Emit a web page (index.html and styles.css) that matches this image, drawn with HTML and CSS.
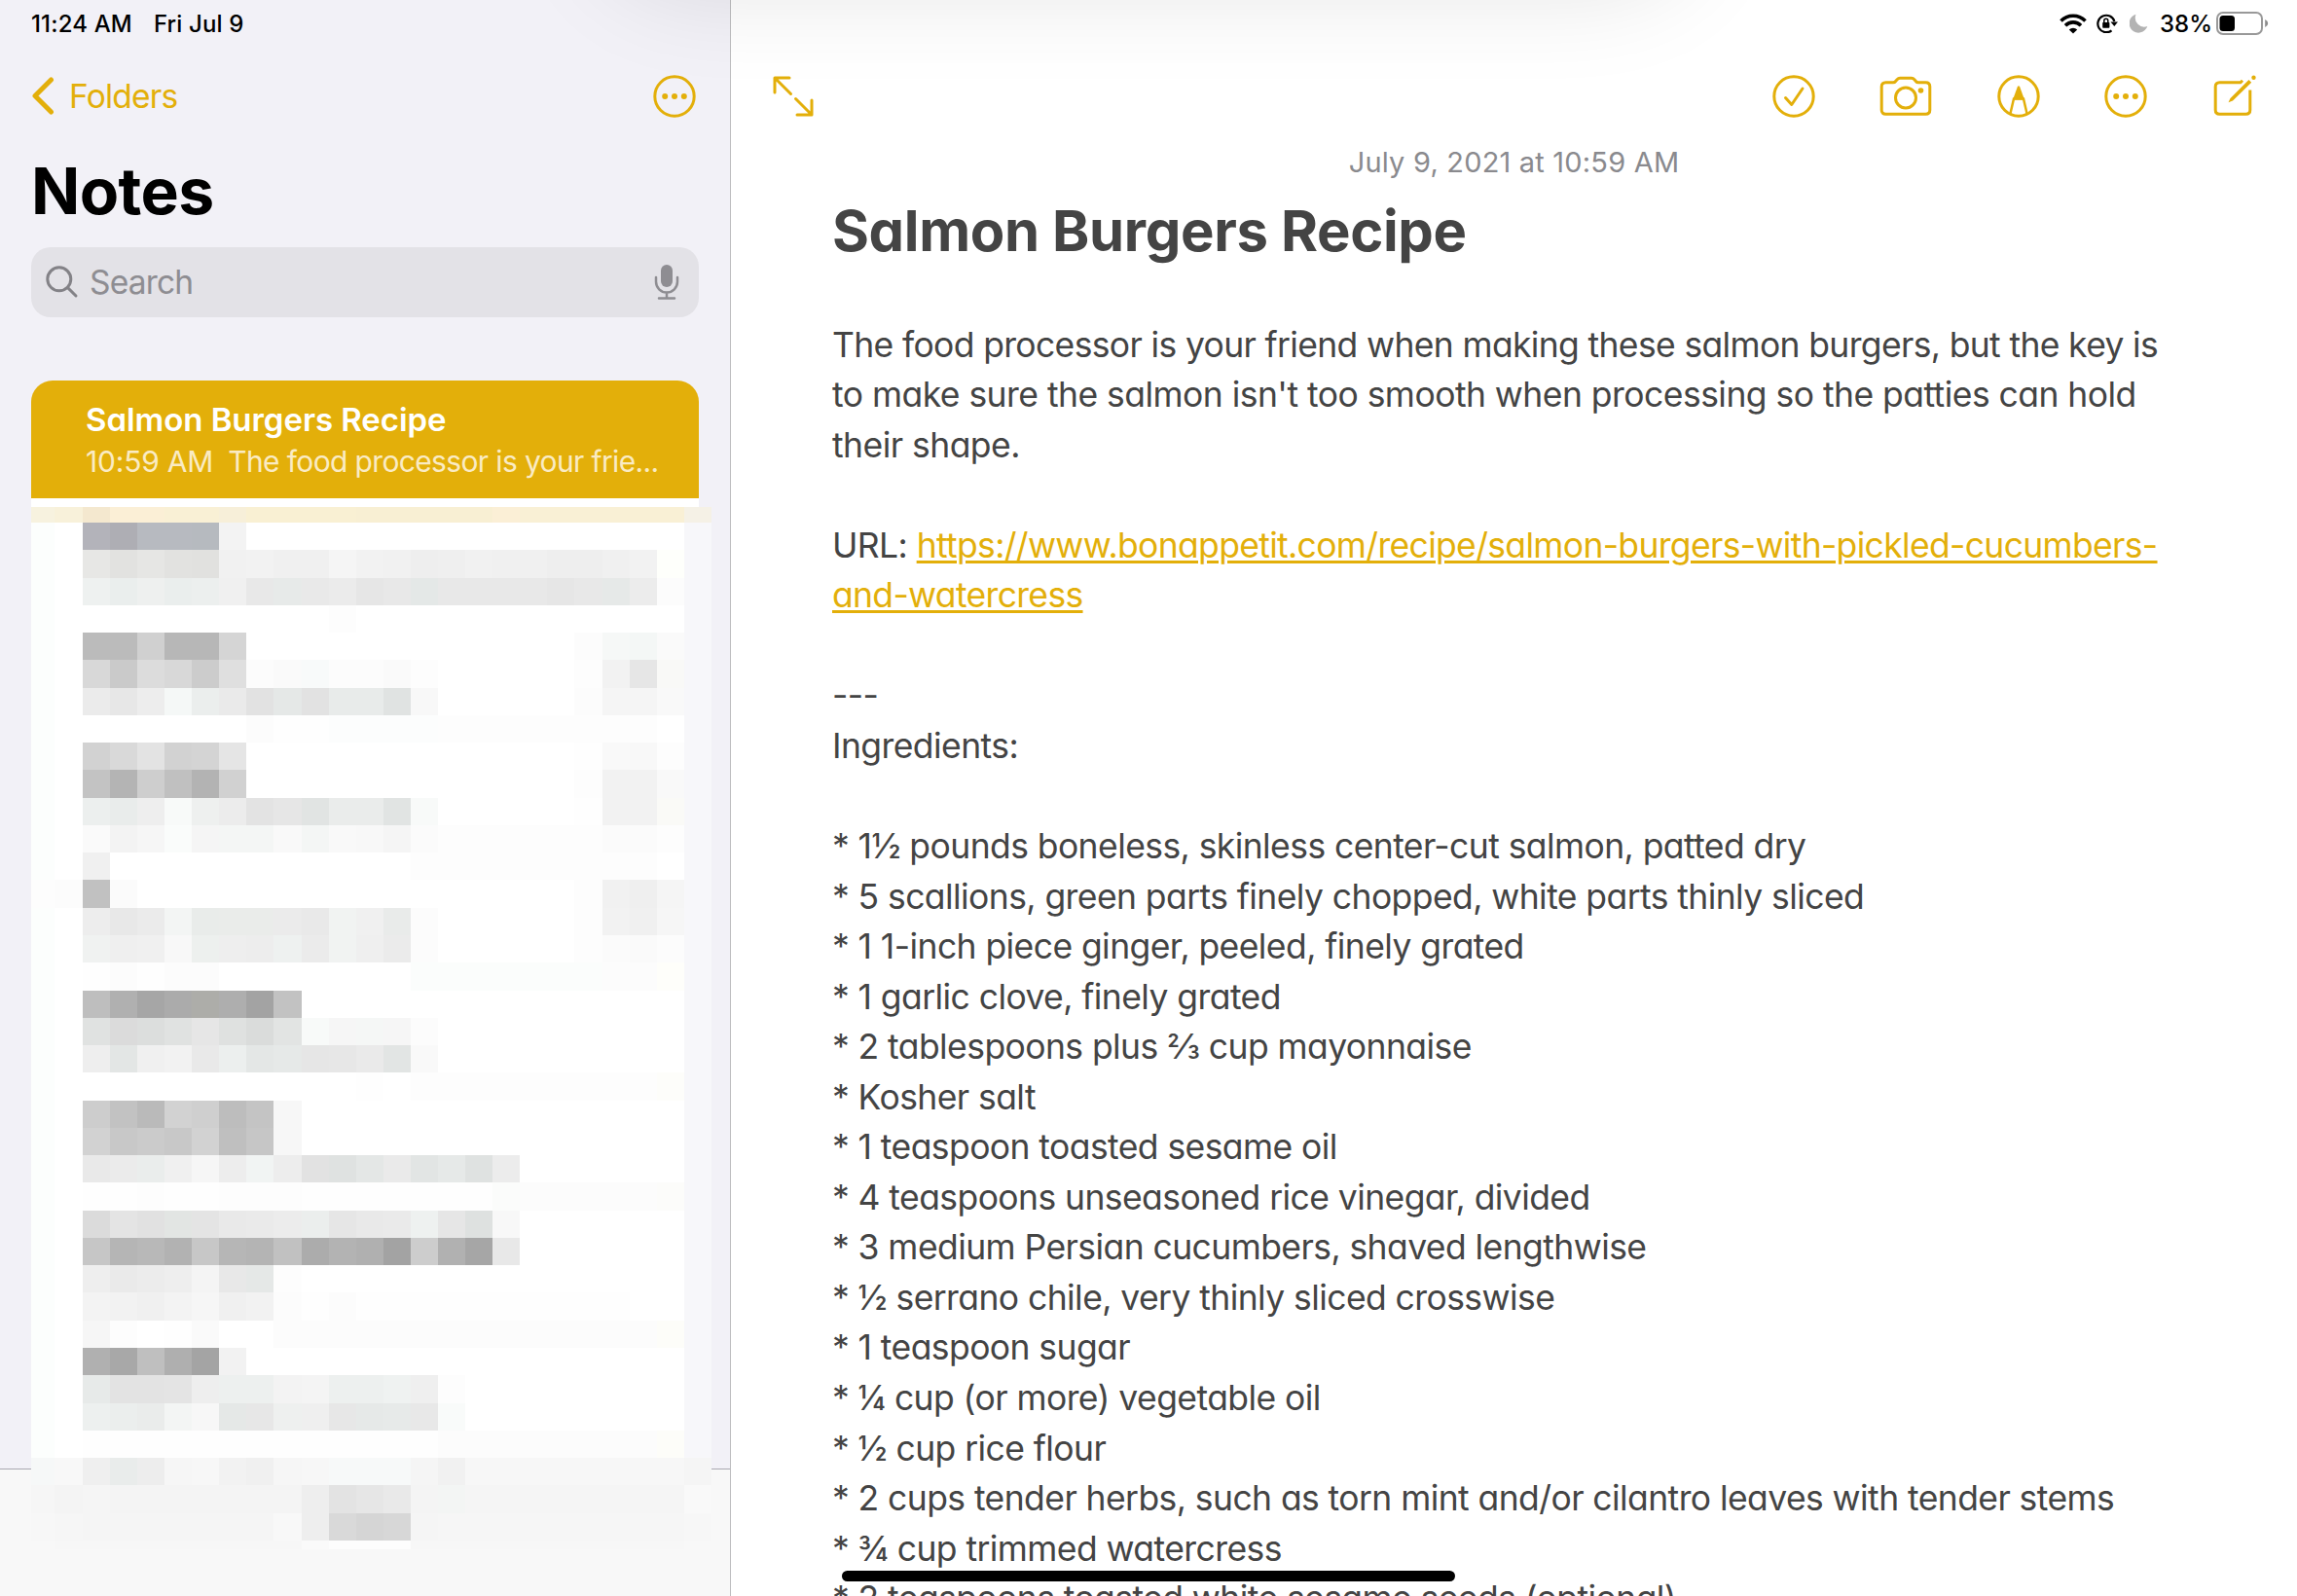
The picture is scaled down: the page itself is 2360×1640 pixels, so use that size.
FILE: index.html
```html
<!DOCTYPE html>
<html lang="en">
<head>
<meta charset="utf-8">
<title>Notes</title>
<link rel="stylesheet" href="styles.css">
</head>
<body>
<div class="app">
  <aside class="sidebar">
    <div class="status"><span class="time">11:24 AM</span><span class="day">Fri Jul 9</span></div>
    <nav class="side-nav">
      <a class="back"><svg width="24" height="39" viewBox="0 0 24 39"><path d="M20.500 3 L4 19.500 L20.500 36" class="back-stroke"/></svg><span class="back-label">Folders</span></a>
      <svg class="side-more" width="44" height="44" viewBox="0 0 44 44"><circle cx="22" cy="22" r="20.200" class="line"/><circle cx="12.200" cy="22" r="3" class="solid"/><circle cx="22" cy="22" r="3" class="solid"/><circle cx="31.800" cy="22" r="3" class="solid"/></svg>
    </nav>
    <h1 class="side-title"><span class="side-title-text">Notes</span></h1>
    <div class="search">
      <svg width="34" height="34" viewBox="0 0 34 34"><circle cx="13.800" cy="13.800" r="12" class="glass"/><path d="M22.600 22.600 L31 31" class="glass"/></svg>
      <span class="search-label">Search</span>
      <svg class="mic" width="26" height="38" viewBox="0 0 26 38"><rect x="7" y="1" width="12" height="23" rx="6" fill="#8e8d92"/><path d="M2 14v4.500a11 11 0 0 0 22 0V14M13 29.500v6M5 35.500h16" class="mic-line"/></svg>
    </div>
    <div class="list">
      <div class="item"><div class="item-title"><span class="t-title">Salmon Burgers Recipe</span></div><div class="item-sub"><span class="t-time">10:59 AM</span><span class="t-prev">The food processor is your frie...</span></div></div>
      <div class="mosaic" id="mosaic"></div>
    </div>
    <div class="toolbar"></div>
  </aside>
  <main class="note">
    <div class="status status-right">
      <svg class="wifi" width="28" height="21" viewBox="0 0 28 21"><path d="M1.500 7.500a17.500 17.500 0 0 1 25 0" class="w"/><path d="M6 12.200a11.400 11.400 0 0 1 16 0" class="w"/><path d="M9.800 16.400a6 6 0 0 1 8.400 0L14 20.600z" fill="#000"/></svg>
      <svg class="lock" width="22" height="20" viewBox="0 0 22 20"><path d="M15.500 17.300A8.700 8.700 0 1 1 18.400 8" class="lk"/><path d="M14.500 8.500h7.500l-3.700 4.500z"/><rect x="6.200" y="9" width="7.200" height="5.800" rx=".8"/><path d="M7.800 9.500V7.300a2 2 0 0 1 4 0v2.200" class="lk2"/></svg>
      <svg class="moon" width="19" height="20" viewBox="0 0 19 20"><path d="M6.500.8A9.600 9.600 0 1 0 18.300 13 9.300 9.300 0 0 1 6.500.8z" fill="#b3b3b3"/></svg>
      <span class="pct">38%</span>
      <svg class="battery" width="54" height="24" viewBox="0 0 54 24"><rect x="1" y="1" width="46" height="22" rx="6" class="bt"/><rect x="3.500" y="4" width="15.500" height="16" rx="3.500"/><path d="M50.200 8v8q3-1.500 3-4t-3-4z" fill="#8c8c8c"/></svg>
    </div>
    <nav class="note-nav">
      <svg width="42" height="42" viewBox="0 0 42 42"><path d="M2 17V2H17M2.500 2.500L18.500 18.500M40 25V40H25M39.500 39.500L23.500 23.500" class="line round"/></svg>
      <div class="actions">
        <svg class="i-check" width="44" height="44" viewBox="0 0 44 44"><circle cx="22" cy="22" r="20.200" class="line"/><path d="M13.500 23.500L19.800 30.500L31 14" class="line round"/></svg>
        <svg class="i-cam" width="54" height="44" viewBox="0 0 54 44"><path d="M6.500 7.800h7.500q1.600 0 2.600-1.300l1.700-1.900q1-1.300 2.800-1.300h11.800q1.800 0 2.800 1.300l1.700 1.900q1 1.300 2.600 1.300H47.500q4.300 0 4.300 4.300V36q0 4.300-4.300 4.300H6.500q-4.300 0-4.300-4.300V12.100q0-4.300 4.300-4.300z" class="line"/><circle cx="27" cy="23.500" r="10.500" class="line"/><circle cx="42.500" cy="16" r="2.800" class="solid"/></svg>
        <svg class="i-pen" width="44" height="44" viewBox="0 0 44 44"><circle cx="22" cy="22" r="20.200" class="line"/><path d="M13.500 39.500L17 24.500H27L30.500 39.500" class="line thin"/><path d="M16 25.500L20.700 12.500q1.300-2.400 2.600 0L28 25.500z" class="solid"/></svg>
        <svg class="i-more" width="44" height="44" viewBox="0 0 44 44"><circle cx="22" cy="22" r="20.200" class="line"/><circle cx="12.200" cy="22" r="3" class="solid"/><circle cx="22" cy="22" r="3" class="solid"/><circle cx="31.800" cy="22" r="3" class="solid"/></svg>
        <svg class="i-new" width="44" height="44" viewBox="0 0 44 44"><path d="M30 5.800l-2 2H6.500q-4.300 0-4.300 4.300V36q0 4.300 4.300 4.300H33.500q4.300 0 4.300-4.300V15.500" class="line"/><path d="M15.500 28.300l2-4.300L36.500 5l2.700 2.700L20 26.500z" class="solid"/><circle cx="41.500" cy="2.700" r="2.200" class="solid"/></svg>
      </div>
    </nav>
    <div class="date"><span class="date-text">July 9, 2021 at 10:59 AM</span></div>
    <article class="body">
      <h2 class="title"><span class="title-text">Salmon Burgers Recipe</span></h2>
      <p><span class="tight">The food processor is your friend when making these salmon burgers, but the key is</span><br><span>to make sure the salmon isn't too smooth when processing so the patties can hold</span><br><span>their shape.</span></p>
      <p>URL: <a class="url">https://www.bonappetit.com/recipe/salmon-burgers-with-pickled-cucumbers-<br>and-watercress</a></p>
      <p>---<br>Ingredients:</p>
      <ul class="ingredients">
        <li>* 1½ pounds boneless, skinless center-cut salmon, patted dry</li>
        <li>* 5 scallions, green parts finely chopped, white parts thinly sliced</li>
        <li>* 1 1-inch piece ginger, peeled, finely grated</li>
        <li>* 1 garlic clove, finely grated</li>
        <li>* 2 tablespoons plus ⅔ cup mayonnaise</li>
        <li>* Kosher salt</li>
        <li>* 1 teaspoon toasted sesame oil</li>
        <li>* 4 teaspoons unseasoned rice vinegar, divided</li>
        <li>* 3 medium Persian cucumbers, shaved lengthwise</li>
        <li>* ½ serrano chile, very thinly sliced crosswise</li>
        <li>* 1 teaspoon sugar</li>
        <li>* ¼ cup (or more) vegetable oil</li>
        <li>* ½ cup rice flour</li>
        <li>* 2 cups tender herbs, such as torn mint and/or cilantro leaves with tender stems</li>
        <li>* ¾ cup trimmed watercress</li>
        <li>* 2 teaspoons toasted white sesame seeds (optional)</li>
      </ul>
    </article>
  </main>
  <div class="top-shade"></div>
  <div class="home-bar"></div>
</div>
<script src="mosaic.js"></script>
</body>
</html>
```
FILE: styles.css
```css
* { box-sizing: border-box; margin: 0; padding: 0; }
body {
  width: 2360px; height: 1640px; overflow: hidden; background: #fff;
  font-family: Inter, "Liberation Sans", sans-serif; color: #444;
}
svg { display: block; flex: none; }
.app { position: relative; display: grid; grid-template-columns: 751px 1fr; width: 2360px; height: 1640px; overflow: hidden; }

.sidebar { position: relative; display: flex; flex-direction: column; height: 1640px; background: #f2f1f7; border-right: 1px solid #bdbdbf; }
.status { display: flex; flex: none; align-items: center; height: 48px; padding-left: 32px; gap: 22px; color: #000; font-size: 24px; font-weight: 500; letter-spacing: .150px; white-space: nowrap; }
.side-nav { display: flex; flex: none; justify-content: space-between; align-items: center; height: 101px; padding: 0 35px 0 32px; }
.back { display: flex; align-items: center; gap: 15px; color: #e3af0a; font-size: 33.500px; letter-spacing: -.800px; }
.back-stroke { fill: none; stroke: #e3af0a; stroke-width: 5; stroke-linecap: round; stroke-linejoin: round; }
.side-title { height: 105px; padding-left: 32px; color: #000; font-size: 66px; line-height: 94px; font-weight: 700; letter-spacing: -.600px; }
.search { display: flex; align-items: center; width: 686px; height: 72px; margin-left: 32px; padding: 0 20px 0 15px; border-radius: 20px; background: #e3e2e7; color: #8e8d92; font-size: 33.500px; letter-spacing: -.800px; }
.search-label { margin-left: 11px; }
.mic { margin-left: auto; }
.glass { fill: none; stroke: #838287; stroke-width: 3; stroke-linecap: round; }
.mic-line { fill: none; stroke: #8e8d92; stroke-width: 2.500; stroke-linecap: round; }
.line { fill: none; stroke: #e3af0a; stroke-width: 3; }
.thin { stroke-width: 2.500; }
.round { stroke-linecap: round; stroke-linejoin: round; }
.solid { fill: #e3af0a; }

.list { position: relative; z-index: 1; width: 686px; margin: 65px 0 0 32px; }
.item { height: 121px; padding: 18px 0 0 56px; border-radius: 22px 22px 0 0; background: #e3af0a; color: #fff; white-space: nowrap; font-feature-settings: "cv11"; }
.item-title { height: 44px; font-size: 33px; line-height: 44px; font-weight: 600; letter-spacing: -.050px; }
.item-sub { display: flex; gap: 15px; height: 43px; font-size: 30px; line-height: 43px; color: #faebc3; }
.t-time { letter-spacing: -.200px; }
.t-prev { letter-spacing: -.640px; }
.mosaic { width: 699px; padding-top: 9px; background: linear-gradient(#fff 0 9px, transparent 9px); background-size: 686px 100%; background-repeat: no-repeat; }
.mosaic-row { display: grid; grid-template-columns: 24px 28.800px repeat(23, 28.100px); height: 28.270px; }
.mosaic-row.first { height: 16px; }
.mosaic-row.last { height: 9px; }
.toolbar { position: absolute; left: 0; right: 0; bottom: 0; height: 131px; border-top: 1px solid #a9a7b0; background: #f8f8f8; }

.note { display: flex; flex-direction: column; height: 1640px; overflow: hidden; background: #fff; }
.status-right { justify-content: flex-end; gap: 0; padding-right: 29px; letter-spacing: 0; }
.lock { margin-left: 10px; }
.moon { margin-left: 12px; }
.pct { margin-left: 12px; width: 53px; }
.battery { margin-left: 5px; }
.w { fill: none; stroke: #000; stroke-width: 3.600; }
.lk { fill: none; stroke: #000; stroke-width: 2.200; }
.lk2 { fill: none; stroke: #000; stroke-width: 1.500; }
.bt { fill: none; stroke: #999; stroke-width: 2; }
.note-nav { display: flex; flex: none; justify-content: space-between; align-items: center; height: 101px; padding: 0 42px 0 43px; }
.actions { display: flex; align-items: center; }
.i-cam { margin-left: 66px; }
.i-pen { margin-left: 67px; }
.i-more { margin-left: 66px; }
.i-new { margin-left: 68px; }
.date { flex: none; height: 36px; text-align: center; font-size: 29px; line-height: 36px; letter-spacing: .190px; color: #8a8a8e; }
.body { flex: none; padding: 16px 0 0 104px; font-size: 35.500px; line-height: 51.550px; letter-spacing: -.580px; white-space: nowrap; font-feature-settings: "cv11"; }
.title { height: 127.500px; font-size: 58px; line-height: 72px; font-weight: 700; letter-spacing: -.360px; }
.body p { margin-bottom: 51.550px; }
.body p span { letter-spacing: -.540px; }
.body p .tight { letter-spacing: -.650px; }
.url { color: #e3af0a; letter-spacing: -.670px; text-decoration: underline; text-decoration-thickness: 3px; text-underline-offset: 3px; }
.ingredients { list-style: none; }

.top-shade { position: absolute; left: 610px; top: -210px; width: 1140px; height: 205px; border-radius: 100px; box-shadow: 0 0 100px rgba(0, 0, 0, .1); pointer-events: none; z-index: 3; }
.home-bar { position: absolute; left: 865px; top: 1614px; width: 630px; height: 11px; border-radius: 6px; background: #000; z-index: 4; }
```
FILE: mosaic.js
```js
// Each row: shade tokens for the columns after the two margin columns; "xx*n" repeats a shade.
// Prefix "L:a,b;" sets the margin columns, suffix ";R:c" the last column.
const rows = [
  "L:f7f2df,f8f1da;f4e8cf fbefd6*2 f9f0d5*2 f7efd9 f9f0d3*4 f8efd3*5 fbefd6 f9f0d5*6;R:f5f1e6",
  "b3b3ba aeaeb4 b7bac0 b7bac0 b6babf f3",
  "e7e7e5 e2e2e0 e6e6e4 e2e2e0 e1e1df f1 f2 f0 f0 f5 f2 f1 ee ef f1 f0 f0 ee ee f0 f2 fefffb",
  "eef1f0 eaeeed eef0ef eaeeed ecefee f0 e8 e7eae9 e9 eb e6 e8 e4e8e7 e8*4 e6 e8 e6e9e8 ec fc",
  "ff*9 fd",
  "bb bb d0 b7 b7 d5 ff*12 fc f6f8f7 f4f7f6 fa",
  "d8 ca dc d8 cc df fc fa f8fafa fc fc fa fd ff*5 fd f2 e6 f9f9f7",
  "eb e7 ed f5f8f7 ebeeed ea e2 e5e8e7 e2 e8ebea e8ebea e0e3e2 f8 ff*5 fc f5 f5 f9",
  "ff*6 fc fe*2 fcfdfd*4 fd*8",
  "d2 d9 e3 d2 d4 e5 ff*12 fe f9 f8 fd",
  "c3 b4 ce c0 b3 d1 ff*12 fd f2 f2 f9",
  "ecefee e9eceb ee f8faf9 eef0ef ec e3 e6 e1e4e3 eaeceb eaeceb e1e4e3 f8faf9 ff*5 fe f2 f2 fafaf7",
  "fa f3 f6 fafcfb f5 f4f6f5 f4f6f5 f9 f4f6f5 f9 f8 f5 fb fd*6 fb fb fd",
  "f0 ff*11 fd*9",
  "L:fd,fc;c1 fb ff*16 fd f1 ef f5",
  "ed e8 eb f3f5f4 e9ecea eaecea eaecea eb e9 f1f3f2 f0 e9ebea fc ff*5 fd f2 f0 f6",
  "f0f2f1 ef f0 f8 edf0ee ee ed eef1f0 eb f1f3f2 ef eb fc ff*5 fd fb fa fc",
  "fe fc fe fc fc ff*7 fbfdfc*7 fc*2 fefefa",
  "be b0 a6 ab adada9 ae a3 c2",
  "e0e2e1 db dcdedd e0e2e1 e6 dfe1e0 dadcdb e2e4e3 f8faf9 f6 f5f7f6 f6 fc",
  "ee e3e6e5 f0 f2 e9 ecefee e4e7e6 e6e9e8 e6 e7 ea e2e5e4 f9",
  "ff*10 fe ff fd*9 fdfdfa",
  "cd c2 ba d2 cf bd c4 f7",
  "d2 c8 cb c8 d2 bf c6 f7",
  "e9 eb eaedec f0 f6 ed f1f4f3 ed e2 dfe2e1 e4e7e6 ea e2e5e4 e6e9e8 dfe2e1 ec",
  "fe fe fd fe fe fd*3 fe*7 fbfcfb fc*5 fcfcfa",
  "db e4 e1 e2e5e3 e4 e9 ea ec ebeeed e6 e9 ea eef1f0 e6 dee1e0 f8",
  "c6 b5 b8 b2 c7 b6 b4 c1 ac b3 b0 a3 cd b1 a6 e8",
  "ee ea ec ee f4 e8 e5e8e7 fd",
  "f3 f2 f0 f3 f6 f0 f2 fc fe fc fe*10",
  "f6 fd ff fe fa ff*2 fc*14 fdfdf9",
  "b0 a8 bf af a4 f2",
  "e7eae9 e3 e3 e4 ee edf0ef edf0ef f3 f4 edf0ef edf0ef eff2f1 ef fd",
  "edf0ef ebeeed eaeceb f3f5f4 f7 e5e8e7 e7 eef0ef ef e7 e6e9e8 e7eae9 e8 f9fbfa",
  "fe*13 fc*8 fdfdf9",
  "L:f6f8f8,f8;ef e9eceb ed f6 f7 f2 f0 f6 f7 f7f9f9*3 f5 f1 f7*8;R:f5",
  "L:f6,f4;f5 f4*7 ee e3 e6 e9 f4 f3f5f4 f5*8;R:f9",
  "L:f7,f6;f5*7 f8 ee d9 d5 d7 f5 f6*9;R:f7",
  "L:f8,f7;f7*8 fa fd*3 f7*10;R:f8"
];

const hex = s => "#" + (s.length === 2 ? s + s + s : s);
const root = document.getElementById("mosaic");

rows.forEach((text, i) => {
  let left = ["fcfefd", "ff"], right = "f7f7fa", body = text;
  const l = body.match(/^L:([^;]*);/);
  if (l) { left = l[1].split(","); body = body.slice(l[0].length); }
  const r = body.match(/;R:(\w+)$/);
  if (r) { right = r[1]; body = body.slice(0, r.index); }
  const cells = [];
  body.split(" ").forEach(token => {
    const [shade, n] = token.split("*");
    for (let k = 0; k < (Number(n) || 1); k++) cells.push(shade);
  });
  while (cells.length < 22) cells.push("ff");
  const row = document.createElement("div");
  row.className = "mosaic-row" + (i === 0 ? " first" : i === rows.length - 1 ? " last" : "");
  [...left, ...cells.slice(0, 22), right].forEach(shade => {
    const cell = document.createElement("i");
    cell.style.background = hex(shade);
    row.appendChild(cell);
  });
  root.appendChild(row);
});
```
